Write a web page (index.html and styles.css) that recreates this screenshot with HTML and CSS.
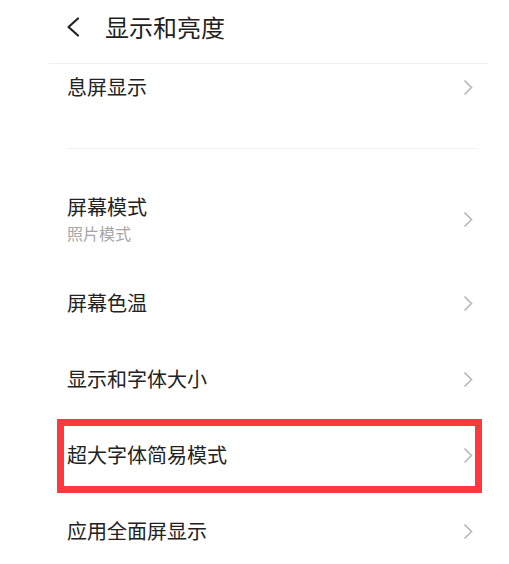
FILE: index.html
```html
<!DOCTYPE html>
<html lang="zh-CN">
<head>
  <meta charset="UTF-8" />
  <title>显示和亮度</title>
  <link rel="stylesheet" href="styles.css">
</head>
<body>
  <div class="header">
    <svg class="back" width="14" height="20" viewBox="0 0 14 20">
      <polyline points="12,1.5 2.5,10 12,18.5" fill="none" stroke="#222" stroke-width="2.2" stroke-linecap="round" stroke-linejoin="round"/>
    </svg>
    <span class="title">显示和亮度</span>
  </div>
  <div class="line-top"></div>

  <div class="section-first">
    <div class="row row-first">
      <span class="label">息屏显示</span>
      <svg class="chev" width="10" height="17" viewBox="0 0 10 17"><polyline points="1.5,1.5 8.5,8.5 1.5,15.5" fill="none" stroke="#b5b5b5" stroke-width="1.5"/></svg>
    </div>
  </div>
  <div class="line-group"></div>

  <div class="list">
    <div class="row row-tall">
      <div class="text">
        <span class="label">屏幕模式</span>
        <span class="sub">照片模式</span>
      </div>
      <svg class="chev" width="10" height="17" viewBox="0 0 10 17"><polyline points="1.5,1.5 8.5,8.5 1.5,15.5" fill="none" stroke="#b5b5b5" stroke-width="1.5"/></svg>
    </div>
    <div class="row">
      <span class="label">屏幕色温</span>
      <svg class="chev" width="10" height="17" viewBox="0 0 10 17"><polyline points="1.5,1.5 8.5,8.5 1.5,15.5" fill="none" stroke="#b5b5b5" stroke-width="1.5"/></svg>
    </div>
    <div class="row">
      <span class="label">显示和字体大小</span>
      <svg class="chev" width="10" height="17" viewBox="0 0 10 17"><polyline points="1.5,1.5 8.5,8.5 1.5,15.5" fill="none" stroke="#b5b5b5" stroke-width="1.5"/></svg>
    </div>
    <!-- 标注的红框 -->
    <div class="row marked">
      <span class="label">超大字体简易模式</span>
      <svg class="chev" width="10" height="17" viewBox="0 0 10 17"><polyline points="1.5,1.5 8.5,8.5 1.5,15.5" fill="none" stroke="#b5b5b5" stroke-width="1.5"/></svg>
    </div>
    <div class="row">
      <span class="label">应用全面屏显示</span>
      <svg class="chev" width="10" height="17" viewBox="0 0 10 17"><polyline points="1.5,1.5 8.5,8.5 1.5,15.5" fill="none" stroke="#b5b5b5" stroke-width="1.5"/></svg>
    </div>
  </div>
</body>
</html>
```

FILE: styles.css
```css
body {
  margin: 0;
  background: #fff;
  font-family: "Noto Sans CJK SC", "Noto Sans", sans-serif;
  color: #222;
  overflow: hidden;
}
.header {
  height: 63px;
  display: flex;
  align-items: center;
  padding-left: 66px;
  padding-bottom: 9px;
  box-sizing: border-box;
}
.back {
  display: block;
}
.title {
  margin-left: 25px;
  font-size: 24px;
  line-height: 30px;
  color: #1f1f1f;
}
.line-top {
  height: 1px;
  background: #f0f0f0;
  margin: 0 21px 0 49px;
}
.line-group {
  height: 1px;
  background: #f2f2f2;
  margin: 0 31px 0 67px;
}
.section-first {
  padding-bottom: 38px;
}
.row {
  height: 76px;
  display: flex;
  align-items: center;
  justify-content: space-between;
  padding: 0 36px 0 67px;
  box-sizing: border-box;
}
.row-first {
  height: 46px;
}
.row-tall {
  height: 92px;
}
.list {
  padding-top: 24px;
}
.text {
  display: flex;
  flex-direction: column;
  gap: 3px;
  margin-top: -1px;
}
.label {
  font-size: 20px;
  line-height: 26px;
}
.sub {
  font-size: 16px;
  line-height: 20px;
  color: #a6a6a6;
}
.chev {
  display: block;
}
.marked {
  position: relative;
}
.marked::after {
  content: "";
  position: absolute;
  left: 57px;
  right: 27px;
  top: 2px;
  bottom: 0;
  border: 7px solid #fc3a3d;
}
```
